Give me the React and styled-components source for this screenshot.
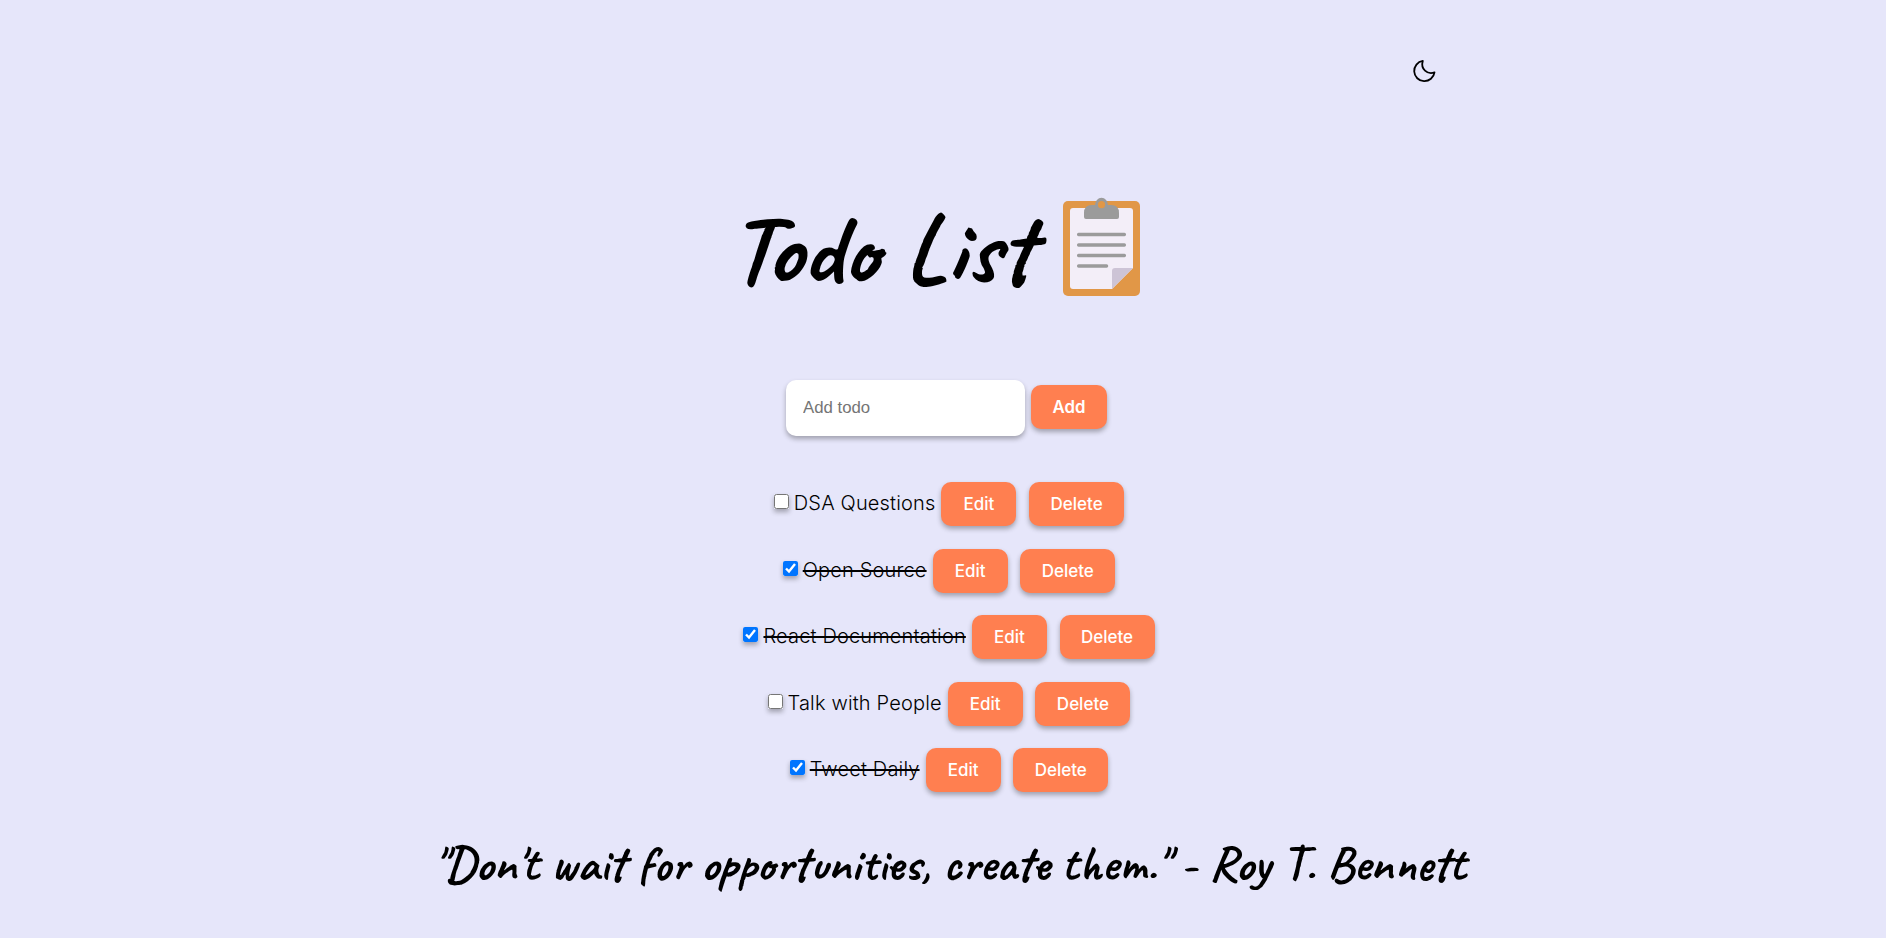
import React, { useState } from "react";
import styled, { createGlobalStyle } from "styled-components";

const GlobalStyle = createGlobalStyle`
  * { box-sizing: border-box; }
  body {
    margin: 0;
    background: #e6e6fa;
    color: #000;
    font-family: Inter, "Liberation Sans", sans-serif;
  }
`;

const shadow = "0 3px 5px rgba(0, 0, 0, 0.3)";

const Page = styled.main`
  height: 938px;
  overflow: hidden;
  display: flex;
  flex-direction: column;
  align-items: center;
`;

const TopBar = styled.header`
  width: 100%;
  height: 142px;
  padding: 57px 448px 0 0;
  display: flex;
  justify-content: flex-end;
`;

const ThemeToggle = styled.button`
  width: 28px;
  height: 28px;
  padding: 0;
  border: 0;
  background: none;
  color: #000;
  svg { display: block; }
`;

const Heading = styled.div`
  width: 411px;
  height: 238px;
  margin-right: 17px;
  padding-top: 56px;
  display: flex;
  justify-content: space-between;
`;

const Title = styled.h1`
  margin: 0;
  font: 700 100px/102px Caveat, cursive;
  white-space: nowrap;
`;

const Clipboard = styled.svg`
  width: 77px;
  height: 98px;
  flex: none;
  overflow: visible;
`;

const AddForm = styled.form`
  height: 56px;
  margin-left: 7px;
  display: flex;
  align-items: flex-start;
  gap: 6px;
`;

const TodoInput = styled.input`
  width: 239px;
  height: 56px;
  padding: 0 17px 1px;
  border: 0;
  border-radius: 10px;
  background: #fff;
  font: 16.8px "Liberation Sans", sans-serif;
  box-shadow: ${shadow};
  &::placeholder { color: #757575; }
`;

const Button = styled.button`
  width: ${(p) => p.$width}px;
  height: 44px;
  padding: 0;
  border: 0;
  border-radius: 10px;
  background: #ff7f50;
  color: #fff;
  font: 500 17px Inter, sans-serif;
  box-shadow: ${shadow};
`;

const AddButton = styled(Button)`
  margin-top: 5px;
  font-weight: 600;
  font-size: 16.8px;
`;

const List = styled.ul`
  margin: 46px 0 0 12px;
  padding: 0;
  list-style: none;
  display: flex;
  flex-direction: column;
  gap: 22.5px;
`;

const Row = styled.li`
  height: 44px;
  display: flex;
  justify-content: center;
  align-items: center;
`;

const Check = styled.input`
  width: 15px;
  height: 15px;
  margin: 0 5px 5px 0;
  box-shadow: ${shadow};
`;

const Label = styled.span`
  margin-right: 6px;
  padding-bottom: 2px;
  font-weight: 300;
  font-size: 20px;
  line-height: 24px;
  letter-spacing: 0.16px;
  white-space: nowrap;
  text-decoration: ${(p) => (p.$done ? "line-through 2px" : "none")};
`;

const Actions = styled.div`
  display: flex;
  gap: 12.7px;
`;

const Quote = styled.p`
  margin: 39px 0 0 13px;
  font: 700 50px/66px Caveat, cursive;
  white-space: nowrap;
`;

const initialTodos = [
  { text: "DSA Questions", done: false },
  { text: "Open Source", done: true },
  { text: "React Documentation", done: true },
  { text: "Talk with People", done: false },
  { text: "Tweet Daily", done: true },
];

function MoonIcon() {
  return (
    <svg width="28" height="28" viewBox="0 0 28 28" fill="none" stroke="currentColor" strokeWidth="1.8" strokeLinejoin="round">
      <path d="M12.8 3.9A10.2 10.2 0 1 0 24.5 15.4C17.3 18 10.3 11.8 12.8 3.9Z" />
    </svg>
  );
}

function ClipboardIcon() {
  return (
    <Clipboard viewBox="0 0 77 98" aria-hidden="true">
      <rect y="3" width="77" height="95" rx="5" fill="#e19747" />
      <path d="M10 10H67Q70 10 70 13V70L49 91H10Q7 91 7 88V13Q7 10 10 10Z" fill="#f3eef8" />
      <path d="M70 70H52Q49 70 49 73V91Z" fill="#cdc4d6" />
      <path d="M21 19V15Q21 7 29 7H32A6.5 7.2 0 0 1 45 7H48Q56 7 56 15V19Q56 21 54 21H23Q21 21 21 19Z" fill="#9b9b9b" />
      <circle cx="38.5" cy="6.7" r="3.6" fill="#e19747" />
      <path d="M15.6 36.5H61.4M15.6 47H61.4M15.6 57.5H61.4M15.6 68H43.6" stroke="#9b9b9b" strokeWidth="3.3" strokeLinecap="round" />
    </Clipboard>
  );
}

export default function App() {
  const [todos, setTodos] = useState(initialTodos);
  const toggle = (index) =>
    setTodos(todos.map((t, i) => (i === index ? { ...t, done: !t.done } : t)));

  return (
    <>
      <GlobalStyle />
      <Page>
        <TopBar>
          <ThemeToggle aria-label="Toggle theme"><MoonIcon /></ThemeToggle>
        </TopBar>
        <Heading>
          <Title>Todo List</Title>
          <ClipboardIcon />
        </Heading>
        <AddForm onSubmit={(e) => e.preventDefault()}>
          <TodoInput placeholder="Add todo" />
          <AddButton $width={76}>Add</AddButton>
        </AddForm>
        <List>
          {todos.map((todo, i) => (
            <Row key={todo.text}>
              <Check type="checkbox" checked={todo.done} onChange={() => toggle(i)} />
              <Label $done={todo.done}>{todo.text}</Label>
              <Actions>
                <Button $width={75}>Edit</Button>
                <Button $width={95}>Delete</Button>
              </Actions>
            </Row>
          ))}
        </List>
        <Quote>"Don't wait for opportunities, create them." - Roy T. Bennett</Quote>
      </Page>
    </>
  );
}
